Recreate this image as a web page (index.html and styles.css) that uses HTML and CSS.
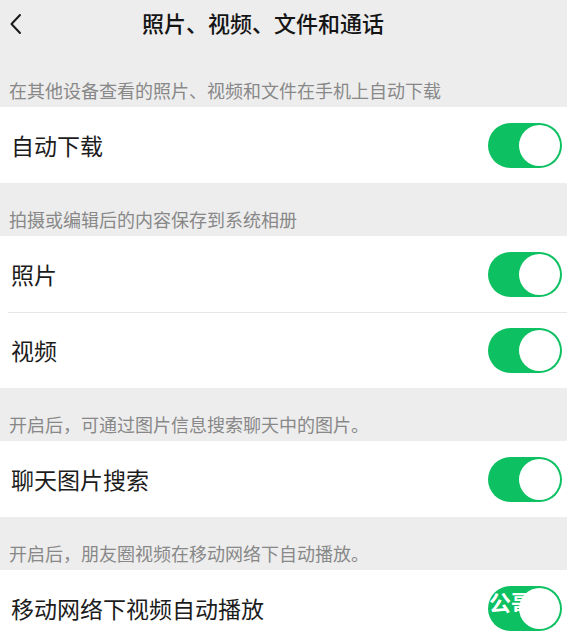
FILE: index.html
```html
<!DOCTYPE html>
<html lang="zh-CN">
<head>
  <meta charset="UTF-8">
  <meta name="viewport" content="width=device-width, initial-scale=1.0">
  <link rel="stylesheet" href="styles.css">
</head>
<body>
  <div id="page">
    <div class="header">
      <svg class="back" width="15" height="22" viewBox="0 0 15 22">
        <path d="M12 2 L3.5 11 L12 20" fill="none" stroke="#1a1a1a" stroke-width="2" stroke-linecap="round" stroke-linejoin="round"/>
      </svg>
      <div class="title">照片、视频、文件和通话</div>
    </div>

    <div class="label">在其他设备查看的照片、视频和文件在手机上自动下载</div>
    <div class="group">
      <div class="row">
        <span>自动下载</span>
        <div class="switch on"><div class="knob"></div></div>
      </div>
    </div>

    <div class="label">拍摄或编辑后的内容保存到系统相册</div>
    <div class="group">
      <div class="row">
        <span>照片</span>
        <div class="switch on"><div class="knob"></div></div>
      </div>
      <div class="row">
        <span>视频</span>
        <div class="switch on"><div class="knob"></div></div>
      </div>
    </div>

    <div class="label">开启后，可通过图片信息搜索聊天中的图片。</div>
    <div class="group">
      <div class="row">
        <span>聊天图片搜索</span>
        <div class="switch on"><div class="knob"></div></div>
      </div>
    </div>

    <div class="label">开启后，朋友圈视频在移动网络下自动播放。</div>
    <div class="group">
      <div class="row">
        <span>移动网络下视频自动播放</span>
        <div class="switch on"><div class="knob"></div></div>
      </div>
    </div>

    <div class="watermark">公哥</div>
  </div>
</body>
</html>
```

FILE: styles.css
```css
body {
  margin: 0;
  background: #ededed;
  font-family: "Noto Sans CJK SC", "Noto Sans", sans-serif;
  color: #1c1c1c;
}

#page {
  position: relative;
  height: 644px;
  overflow: hidden;
}

.header {
  display: flex;
  align-items: flex-start;
  height: 54px;
  padding: 0 64px 0 8px;
  box-sizing: border-box;
}

.back {
  margin-top: 13px;
  flex-shrink: 0;
}

.title {
  flex: 1;
  text-align: center;
  font-size: 22px;
  font-weight: 500;
  line-height: 24px;
  margin-top: 10px;
  color: #151515;
}

.label {
  padding: 24px 12px 5px 9px;
  font-size: 18px;
  line-height: 24px;
  color: #888;
}

.group {
  background: #fff;
}

.row {
  display: flex;
  align-items: center;
  justify-content: space-between;
  height: 76px;
  padding: 0 5px 0 11px;
  font-size: 23px;
  position: relative;
}

.row + .row::before {
  content: "";
  position: absolute;
  left: 8px;
  right: 0;
  top: 0;
  border-top: 1px solid #e6e6e6;
}

.switch {
  width: 74px;
  height: 45px;
  border-radius: 23px;
  background: #e5e5e5;
  display: flex;
  align-items: center;
  padding: 0 2px;
  box-sizing: border-box;
}

.switch.on {
  background: #0dc162;
  justify-content: flex-end;
}

.knob {
  width: 41px;
  height: 41px;
  border-radius: 50%;
  background: #fff;
}

.watermark {
  position: absolute;
  left: 489px;
  top: 585px;
  font-size: 22px;
  font-weight: 700;
  color: #fff;
}
```
